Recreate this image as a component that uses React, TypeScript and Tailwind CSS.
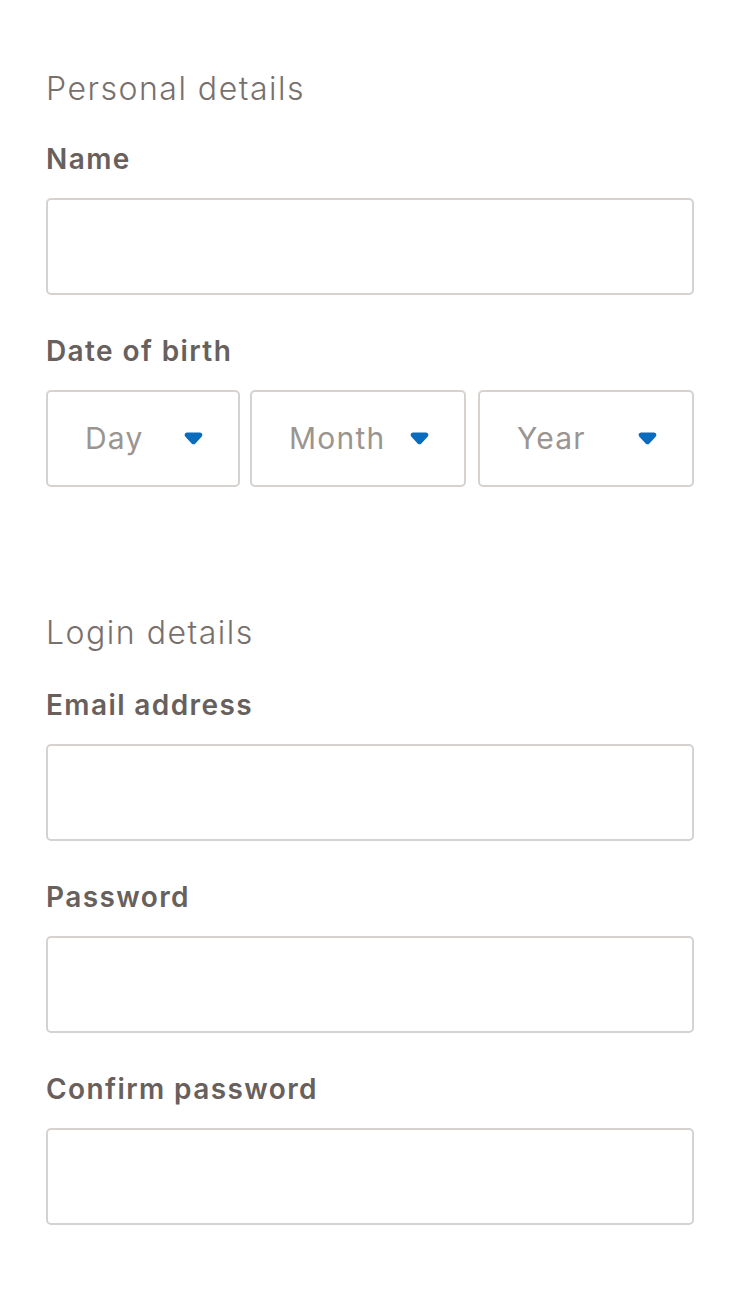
import React from "react";

const font = { fontFamily: "Inter, 'Noto Sans', sans-serif" };

function Caret() {
  return (
    <svg width="19" height="13" viewBox="0 0 19 13" className="shrink-0">
      <path
        d="M3.2 0.5 H15.8 C18.2 0.5 19.2 2.9 17.6 4.8 L11.4 11.4 C10.3 12.6 8.7 12.6 7.6 11.4 L1.4 4.8 C-0.2 2.9 0.8 0.5 3.2 0.5 Z"
        fill="#0a6cbd"
      />
    </svg>
  );
}

function Label({ children, top }: { children: React.ReactNode; top: string }) {
  return (
    <label className={`block h-[36px] text-[28px] leading-[36px] font-semibold tracking-[0.05em] text-[#67605d] ${top}`}>
      {children}
    </label>
  );
}

function TextInput() {
  return (
    <input
      className="mt-[21px] block h-[97px] w-full rounded-[5px] border-2 border-[#d5d2cf] bg-white px-[37px] text-[30px] text-[#4a4543] outline-none"
      style={font}
    />
  );
}

function Select({ label, width, className }: { label: string; width: string; className?: string }) {
  return (
    <div
      className={`flex h-[97px] items-center justify-between rounded-[5px] border-2 border-[#d5d2cf] bg-white pr-[35px] pl-[37px] ${width} ${className ?? ""}`}
    >
      <span className="text-[30px] tracking-[0.04em] text-[#9b9592]">{label}</span>
      <Caret />
    </div>
  );
}

export default function App() {
  return (
    <div className="min-h-[1312px] bg-white" style={font}>
      <form className="ml-[46px] w-[648px] pt-[71px]">
        <h2 className="h-[36px] text-[32px] leading-[36px] font-light tracking-[0.047em] text-[#77706d]">
          Personal details
        </h2>
        <Label top="mt-[34px]">Name</Label>
        <TextInput />

        <Label top="mt-[38px]">Date of birth</Label>
        <div className="mt-[21px] flex">
          <Select label="Day" width="w-[194px]" />
          <Select label="Month" width="w-[216px]" className="ml-[10px]" />
          <Select label="Year" width="w-[216px]" className="ml-[12px]" />
        </div>

        <h2 className="mt-[128px] h-[36px] text-[32px] leading-[36px] font-light tracking-[0.047em] text-[#77706d]">
          Login details
        </h2>
        <Label top="mt-[36px]">Email address</Label>
        <TextInput />

        <Label top="mt-[38px]">Password</Label>
        <TextInput />

        <Label top="mt-[38px]">Confirm password</Label>
        <TextInput />
      </form>
    </div>
  );
}
